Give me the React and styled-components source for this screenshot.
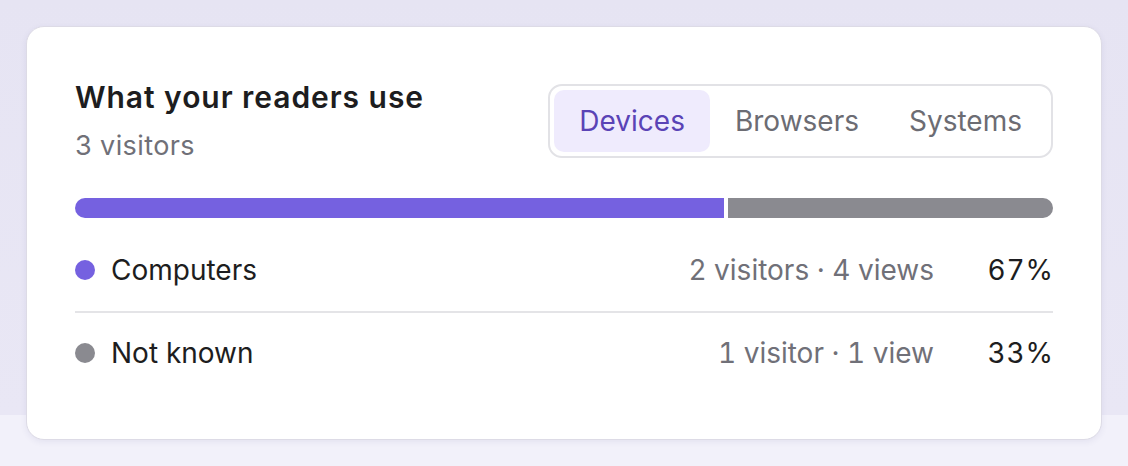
import React, { useState } from "react";
import styled, { createGlobalStyle } from "styled-components";

const GlobalStyle = createGlobalStyle`
  * { box-sizing: border-box; }
  html, body { margin: 0; padding: 0; }
  body {
    font-family: Inter, "Noto Sans", "Liberation Sans", sans-serif;
    -webkit-font-smoothing: antialiased;
  }
`;

const Page = styled.div`
  width: 1128px;
  height: 466px;
  padding: 26px;
  background: linear-gradient(to bottom, #e6e4f3 0, #e9e7f5 415px, #f2f1fa 415px);
`;

const Card = styled.section`
  height: 414px;
  width: 1076px;
  background: #fff;
  border: 1px solid #dddbe6;
  border-radius: 18px;
  box-shadow: 0 2px 6px rgba(70, 60, 130, 0.08);
  padding: 52px 48px 0;
`;

const Header = styled.div`
  display: flex;
  align-items: center;
  justify-content: space-between;
  margin-bottom: 36px;
`;

const Titles = styled.div`
  display: flex;
  flex-direction: column;
  gap: 15px;
`;

const Title = styled.h2`
  margin: 0;
  font-size: 30px;
  line-height: 36px;
  font-weight: 600;
  color: #1d1d20;
  letter-spacing: 0.95px;
`;

const Subtitle = styled.div`
  font-size: 27px;
  line-height: 32px;
  color: #707078;
  letter-spacing: 0.4px;
`;

const Tabs = styled.div`
  display: flex;
  padding: 4px;
  border: 2px solid #e2e2e6;
  border-radius: 14px;
`;

const Tab = styled.button`
  border: 0;
  font-family: inherit;
  font-size: 28px;
  line-height: 34px;
  padding: 14px 25px;
  border-radius: 10px;
  cursor: pointer;
  background: ${(p) => (p.$active ? "#efebfd" : "transparent")};
  color: ${(p) => (p.$active ? "#5a43b6" : "#6c6c73")};
`;

const Bar = styled.div`
  display: flex;
  gap: 4px;
  height: 20px;
  border-radius: 10px;
  overflow: hidden;
  margin-bottom: 11px;
`;

const Segment = styled.div`
  flex: ${(p) => p.$share};
  background: ${(p) => p.$color};
`;

const List = styled.ul`
  list-style: none;
  margin: 0;
  padding: 0;
`;

const Row = styled.li`
  display: flex;
  align-items: center;
  height: 82px;
  & + & {
    border-top: 2px solid #e4e4e7;
  }
`;

const Dot = styled.span`
  width: 20px;
  height: 20px;
  border-radius: 50%;
  background: ${(p) => p.$color};
  margin-right: 16px;
  flex-shrink: 0;
`;

const Label = styled.span`
  flex: 1;
  font-size: 28px;
  color: #1d1d20;
`;

const Meta = styled.span`
  font-size: 28px;
  color: #707078;
  font-variant-numeric: tabular-nums;
`;

const Percent = styled.span`
  width: 120px;
  margin-right: -1px;
  text-align: right;
  font-size: 28px;
  color: #1d1d20;
  letter-spacing: 0.9px;
  font-variant-numeric: tabular-nums;
`;

const rows = [
  { name: "Computers", color: "#7561e0", visitors: 2, views: 4 },
  { name: "Not known", color: "#8a8a90", visitors: 1, views: 1 },
];

const total = rows.reduce((s, r) => s + r.visitors, 0);
const plural = (n, w) => `${n} ${w}${n === 1 ? "" : "s"}`;

export default function App() {
  const [tab, setTab] = useState("Devices");
  return (
    <>
      <GlobalStyle />
      <Page>
        <Card>
          <Header>
            <Titles>
              <Title>What your readers use</Title>
              <Subtitle>{plural(total, "visitor")}</Subtitle>
            </Titles>
            <Tabs>
              {["Devices", "Browsers", "Systems"].map((t) => (
                <Tab key={t} $active={t === tab} onClick={() => setTab(t)}>
                  {t}
                </Tab>
              ))}
            </Tabs>
          </Header>
          <Bar>
            {rows.map((r) => (
              <Segment key={r.name} $share={r.visitors} $color={r.color} />
            ))}
          </Bar>
          <List>
            {rows.map((r) => (
              <Row key={r.name}>
                <Dot $color={r.color} />
                <Label>{r.name}</Label>
                <Meta>
                  {plural(r.visitors, "visitor")} · {plural(r.views, "view")}
                </Meta>
                <Percent>{Math.round((r.visitors / total) * 100)}%</Percent>
              </Row>
            ))}
          </List>
        </Card>
      </Page>
    </>
  );
}
